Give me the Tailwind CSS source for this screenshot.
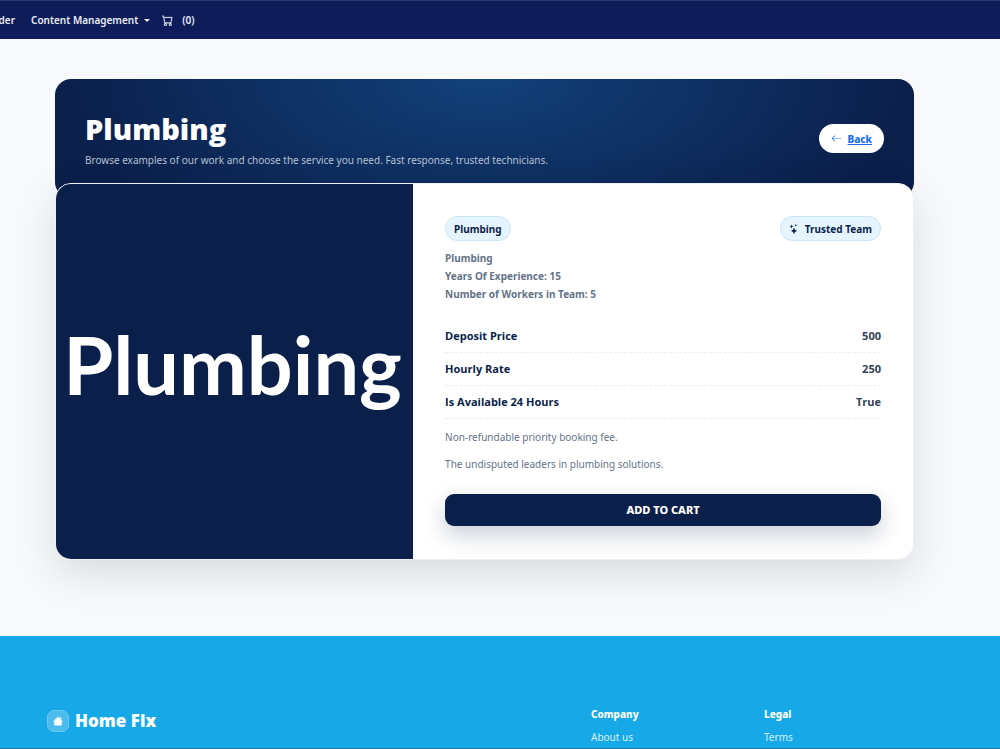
<!DOCTYPE html>
<html lang="en">
<head>
<meta charset="utf-8">
<meta name="viewport" content="width=device-width, initial-scale=1">
<title>Plumbing - Home Fix</title>
<script src="https://cdn.jsdelivr.net/npm/@tailwindcss/browser@4"></script>
</head>
<body class="flex min-h-screen flex-col overflow-x-hidden bg-[#f7f9fd] font-['Noto_Sans','Open_Sans',sans-serif] text-[10px] leading-[18px] text-[#647387]">
<header class="flex h-[39px] shrink-0 items-center border-t border-[#2b376c] bg-[#0e1c59] font-semibold text-[#e9ecf6]">
  <nav class="flex items-center" aria-label="Main">
    <a href="#" class="flex w-[31px] justify-end pr-4 whitespace-nowrap">der</a>
    <button type="button" class="flex items-center gap-[6px] whitespace-nowrap">Content Management
      <svg class="h-[3px] w-[6px]" viewBox="0 0 6 3" fill="currentColor" aria-hidden="true"><path d="M0 0h6L3 3z"/></svg>
    </button>
    <a href="#" class="ml-3 flex items-center gap-[9px]" aria-label="Cart (0)">
      <svg class="size-[11px]" viewBox="0 0 16 16" fill="currentColor" aria-hidden="true"><path d="M0 1.500A.5.5 0 0 1 .5 1H2a.5.5 0 0 1 .485.379L2.890 3H14.500a.5.5 0 0 1 .491.592l-1.500 8A.5.5 0 0 1 13 12H4a.5.5 0 0 1-.491-.408L2.010 3.607 1.610 2H.5a.5.5 0 0 1-.5-.5M3.102 4l1.313 7h8.170l1.313-7zM5 12a2 2 0 1 0 0 4 2 2 0 0 0 0-4m7 0a2 2 0 1 0 0 4 2 2 0 0 0 0-4m-7 1a1 1 0 1 1 0 2 1 1 0 0 1 0-2m7 0a1 1 0 1 1 0 2 1 1 0 0 1 0-2" stroke="currentColor" stroke-width=".4"/></svg>
      <span>(0)</span>
    </a>
  </nav>
</header>

<main class="mr-[86px] ml-[55px] pt-10 pb-[76px]">
  <section class="flex items-start justify-between rounded-[16px] bg-[#0b1f4b] bg-[radial-gradient(ellipse_430px_190px_at_50%_0%,#12417a,#0b1f4b)] px-[30px] pt-8 pb-[29px]">
    <div>
      <h1 class="font-['Open_Sans',sans-serif] text-[29px] leading-9 font-extrabold text-white">Plumbing</h1>
      <p class="mt-1 text-[#b5c0d2]">Browse examples of our work and choose the service you need. Fast response, trusted technicians.</p>
    </div>
    <a href="#" class="mt-[13px] flex h-[29px] items-center gap-[6px] rounded-full bg-white px-3 font-extrabold text-[#1a6df0]">
      <svg class="size-[11px]" viewBox="0 0 16 16" fill="currentColor" aria-hidden="true"><path fill-rule="evenodd" d="M15 8a.5.5 0 0 0-.5-.5H2.707l3.147-3.146a.5.5 0 1 0-.708-.708l-4 4a.5.5 0 0 0 0 .708l4 4a.5.5 0 0 0 .708-.708L2.707 8.5H14.5A.5.5 0 0 0 15 8"/></svg>
      <span class="underline">Back</span>
    </a>
  </section>

  <article class="relative -mt-[15px] grid grid-cols-[5fr_7fr] overflow-hidden rounded-[16px] border border-[#eef0f4] bg-white shadow-[0_14px_40px_rgba(0,0,0,0.12)]">
    <div class="flex items-center justify-center bg-[#0b1f4b] pr-1 pb-4 font-['Lato',sans-serif] text-[81px] leading-none font-bold text-white">Plumbing</div>
    <div class="px-8 pt-8 pb-[33px]">
      <div class="flex items-center justify-between font-bold text-[#0b1f4b]">
        <span class="flex h-[25px] items-center rounded-full border border-[#c9e6f7] bg-[#e6f4fd] px-2">Plumbing</span>
        <span class="flex h-[25px] items-center gap-[6px] rounded-full border border-[#c9e6f7] bg-[#e6f4fd] px-2">
          <svg class="size-[10px]" viewBox="0 0 16 16" fill="currentColor" aria-hidden="true"><path d="M7.657 6.247c.11-.33.576-.33.686 0l.645 1.937a2.89 2.89 0 0 0 1.829 1.828l1.936.645c.33.11.33.576 0 .686l-1.937.645a2.89 2.89 0 0 0-1.828 1.829l-.645 1.936a.361.361 0 0 1-.686 0l-.645-1.937a2.89 2.89 0 0 0-1.828-1.828l-1.937-.645a.361.361 0 0 1 0-.686l1.937-.645a2.89 2.89 0 0 0 1.828-1.828zM3.794 1.148a.217.217 0 0 1 .412 0l.387 1.162c.173.518.579.924 1.097 1.097l1.162.387a.217.217 0 0 1 0 .412l-1.162.387A1.73 1.73 0 0 0 4.593 5.69l-.387 1.162a.217.217 0 0 1-.412 0L3.407 5.69A1.73 1.73 0 0 0 2.31 4.593l-1.162-.387a.217.217 0 0 1 0-.412l1.162-.387A1.73 1.73 0 0 0 3.407 2.31zM10.863.099a.145.145 0 0 1 .274 0l.258.774c.115.346.386.617.732.732l.774.258a.145.145 0 0 1 0 .274l-.774.258a1.16 1.16 0 0 0-.732.732l-.258.774a.145.145 0 0 1-.274 0l-.258-.774a1.16 1.16 0 0 0-.732-.732L9.1 2.137a.145.145 0 0 1 0-.274l.774-.258c.346-.115.617-.386.732-.732z"/></svg>
          Trusted Team
        </span>
      </div>
      <div class="mt-2 font-bold">
        <p>Plumbing</p>
        <p>Years Of Experience: 15</p>
        <p>Number of Workers in Team: 5</p>
      </div>
      <dl class="mt-[17px] font-['Open_Sans',sans-serif] text-[11px] font-bold">
        <div class="flex h-[33px] items-center justify-between border-b border-dashed border-[#eceef1]"><dt class="text-[#0b1f4b]">Deposit Price</dt><dd class="text-[#334155]">500</dd></div>
        <div class="flex h-[33px] items-center justify-between border-b border-dashed border-[#eceef1]"><dt class="text-[#0b1f4b]">Hourly Rate</dt><dd class="text-[#334155]">250</dd></div>
        <div class="flex h-[33px] items-center justify-between border-b border-dashed border-[#eceef1]"><dt class="text-[#0b1f4b]">Is Available 24 Hours</dt><dd class="text-[#334155]">True</dd></div>
      </dl>
      <p class="mt-[9px]">Non-refundable priority booking fee.</p>
      <p class="mt-[9px]">The undisputed leaders in plumbing solutions.</p>
      <button type="button" class="mt-[21px] block h-8 w-full rounded-[9px] bg-[#0b1f4b] font-['Noto_Sans',sans-serif] text-[11px] font-extrabold text-white shadow-[0_9px_22px_rgba(11,31,75,0.22)]">ADD TO CART</button>
    </div>
  </article>
</main>

<footer class="flex-1 border-b border-[#2c7194] bg-[#17a9e7] pt-[69px] pl-[47px] text-[#d5f0fb]">
  <div class="grid grid-cols-[544px_173px_1fr]">
    <a href="#" class="mt-[5px] flex h-[22px] items-center gap-[6px] font-['Open_Sans',sans-serif] text-[17px] font-extrabold text-white">
      <span class="flex size-[22px] items-center justify-center rounded-[7px] border border-[#6ac8f0] bg-[#4dbcec]">
        <svg class="size-[10px]" viewBox="0 0 16 16" fill="currentColor" aria-hidden="true"><path d="M8.707 1.5a1 1 0 0 0-1.414 0L.646 8.146a.5.5 0 0 0 .708.708L8 2.207l6.646 6.647a.5.5 0 0 0 .708-.708L13 5.793V2.5a.5.5 0 0 0-.5-.5h-1a.5.5 0 0 0-.5.5v1.293z"/><path d="m8 2.500 6 6v5a1.500 1.500 0 0 1-1.500 1.500h-9A1.500 1.500 0 0 1 2 13.500v-5z"/></svg>
      </span>
      Home Fix
    </a>
    <div>
      <h2 class="font-extrabold text-white">Company</h2>
      <a href="#" class="mt-[5px] block">About us</a>
    </div>
    <div>
      <h2 class="font-extrabold text-white">Legal</h2>
      <a href="#" class="mt-[5px] block">Terms</a>
    </div>
  </div>
</footer>
</body>
</html>
